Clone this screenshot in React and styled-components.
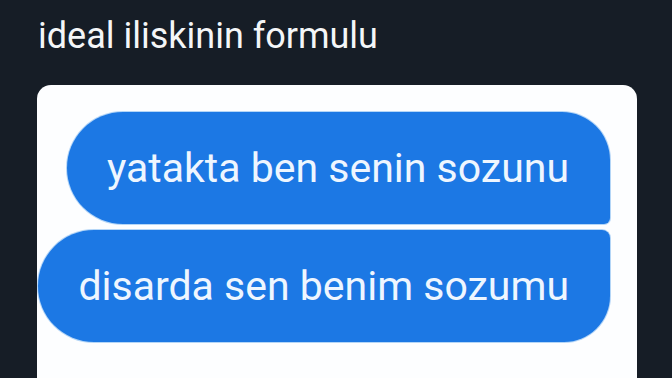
import React from 'react';
import styled, { createGlobalStyle } from 'styled-components';

const GlobalStyle = createGlobalStyle`
  html, body {
    margin: 0;
    padding: 0;
    background: #161d26;
    overflow: hidden;
  }
`;

const Page = styled.div`
  width: 672px;
  height: 378px;
  box-sizing: border-box;
  overflow: hidden;
  padding: 14px 35px 0 37px;
  background: #161d26;
  font-family: Roboto, 'Noto Sans', sans-serif;
`;

const Title = styled.h1`
  margin: 0 0 27px 1px;
  font-size: 36px;
  font-weight: 400;
  line-height: 44px;
  color: #f4f6f8;
`;

const Card = styled.div`
  display: flex;
  flex-direction: column;
  gap: 6px;
  height: 320px;
  padding: 27px 27px 0 1px;
  background: #fdfeff;
  border-radius: 14px 14px 0 0;
`;

const Bubble = styled.div`
  margin-left: ${({ indent }) => indent}px;
  height: 112px;
  display: flex;
  align-items: center;
  justify-content: flex-end;
  padding-right: 41px;
  background: #1c78e4;
  border-radius: ${({ tail }) =>
    tail === 'bottom' ? '56px 48px 6px 56px' : '56px 8px 46px 56px'};
  color: #eef6ff;
  font-size: 41px;
  box-shadow: 0 0 0 1px rgba(120, 180, 240, 0.55);
`;

function App() {
  return (
    <Page>
      <GlobalStyle />
      <Title>ideal iliskinin formulu</Title>
      <Card>
        <Bubble indent={29} tail="bottom">
          yatakta ben senin sozunu
        </Bubble>
        <Bubble indent={0} tail="top">
          disarda sen benim sozumu
        </Bubble>
      </Card>
    </Page>
  );
}

export default App;
